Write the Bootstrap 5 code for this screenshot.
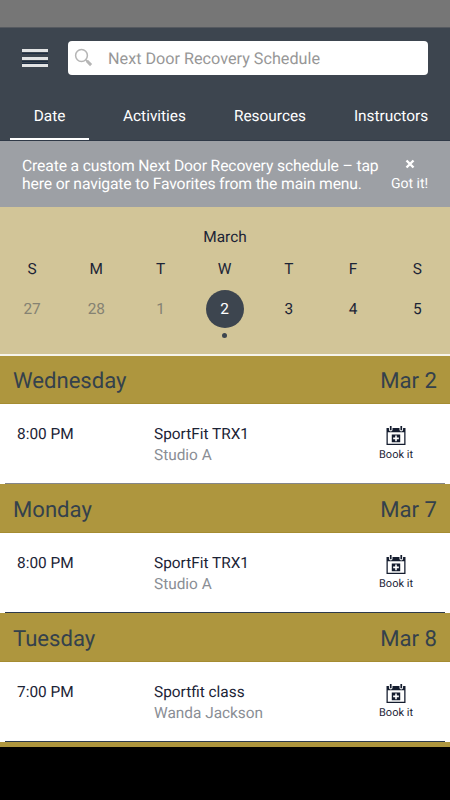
<!DOCTYPE html>
<html lang="en">
<head>
<meta charset="utf-8">
<meta name="viewport" content="width=device-width, initial-scale=1">
<title>Schedule</title>
<link href="https://cdn.jsdelivr.net/npm/bootstrap@5.3.0/dist/css/bootstrap.min.css" rel="stylesheet">
<style>
:root{--slate:#3d454f;--navy:#1c2436;--gold:#ae963e;--sand:#d2c598}
body{font-family:Roboto,"Liberation Sans",sans-serif;font-size:15.4px;font-weight:400;line-height:20px;color:var(--navy);background:#000;height:800px;text-rendering:geometricPrecision}
.screen{height:747px;background:#fff}
.statusbar{height:27px;background:#767676}
.topbar{height:114px;background:var(--slate);border-top:1px solid #55595f;border-bottom:1px solid #2f3947}
.searchrow{height:60px;padding:0 22px}
.searchbox{width:360px;height:34px;border-radius:4px;margin-left:20px;color:#979797;padding-left:6px;font-size:16.2px}
.searchbox svg{margin-right:15px;margin-bottom:1px}
.searchbox span{padding-top:2px}
.tabs{height:52px;color:#fff;padding:0 10px}
.tabs a{color:#fff;text-decoration:none;height:52px;padding-top:18px;text-align:center}
.tabs .active{border-bottom:2px solid #fff}
.t1{width:79px}.t2{width:131px}.t3{width:100px}.t4{width:120px;padding-left:22px}
.tip{height:66px;background:#9da0a5;color:#fff;padding:16px 0 0 22px;line-height:18px}
.tip .msg{width:369px;font-size:15.7px;letter-spacing:-.14px}
.tip .ok{font-size:14px;width:37px}
.tip .ok svg{margin-top:2px;margin-bottom:6px}
.calendar{height:149px;background:var(--sand);border-bottom:2px solid #f6f4ec}
.week{display:grid;grid-template-columns:repeat(7,64.2px);text-align:center}
.past{color:#858272}
.today{width:38px;height:38px;background:var(--slate);color:#fff}
.today-cell{margin-top:-1px}
.dot{width:5px;height:5px;background:var(--slate);margin-top:5px}
.dayhead{height:49px;background:var(--gold);color:#34414c;font-size:22.1px;padding:3px 13px 0;border-bottom:1px solid #a58c31}
.dayhead.first{height:48px;padding-top:2px}
.slot{height:80px;background:linear-gradient(#2d3a4c,#2d3a4c) 5px 100%/440px 1px no-repeat #fff;padding:20px 0 0 17px;line-height:21.3px}
.slot.soft{background-image:linear-gradient(#85868a,#85868a)}
.slot .when{width:137px}.slot .what{width:218px}
.sub{color:#8a8e95}
.book{font-size:11px;line-height:14px;width:48px}
.book svg{margin-top:2px;margin-bottom:3px}
</style>
<script src="https://cdn.jsdelivr.net/npm/bootstrap@5.3.0/dist/js/bootstrap.bundle.min.js"></script>
</head>
<body>
<svg class="d-none">
<symbol id="cal" viewBox="0 0 18 18"><path fill="#141c2e" fill-rule="evenodd" d="M0 2h2.300v1.500a1.700 1.700 0 0 0 3.400 0V2h6.600v1.500a1.700 1.700 0 0 0 3.400 0V2H18v16H0zM1.200 6v10.900h15.600V6z"/><path fill="#141c2e" d="M3.200 0h1.600v4H3.200zM13.200 0h1.600v4h-1.600zM5 8h8v7.500H5z"/><path stroke="#fff" stroke-width="1.500" d="M6.300 11.700h5.400M9 9v5.400"/></symbol>
</svg>
<div class="screen d-flex flex-column overflow-hidden">
<div class="statusbar flex-shrink-0"></div>
<header class="topbar flex-shrink-0">
<div class="searchrow d-flex align-items-center">
<svg width="26" height="18" viewBox="0 0 26 18"><path stroke="#e2e3e4" stroke-width="3" d="M0 1.500h26M0 9.500h26M0 16.500h26"/><path stroke="#1e2d42" d="M0 4.500h26M0 12.500h26M0 14.500h26"/></svg>
<div class="searchbox bg-white d-flex align-items-center"><svg width="19" height="19" viewBox="0 0 19 19" fill="none" stroke="#b5b5b5"><circle cx="7.500" cy="7.500" r="5.900" stroke-width="1.500"/><path stroke-width="1.500" d="M11.500 11.500l2 2"/><path stroke-width="3" d="M12.800 12.800l4.300 4.300"/></svg><span>Next Door Recovery Schedule</span></div>
</div>
<nav class="tabs d-flex"><a class="active t1" href="#">Date</a><a class="t2" href="#">Activities</a><a class="t3" href="#">Resources</a><a class="t4" href="#">Instructors</a></nav>
</header>
<div class="tip d-flex flex-shrink-0"><div class="msg text-nowrap">Create a custom Next Door Recovery schedule – tap<br>here or navigate to Favorites from the main menu.</div><div class="ok d-flex flex-column align-items-center text-nowrap"><svg width="10" height="10" viewBox="0 0 10 10"><path stroke="#fff" stroke-width="2.400" d="M1.500 1.500l7 7M8.500 1.500l-7 7"/></svg><span>Got it!</span></div></div>
<section class="calendar flex-shrink-0">
<div class="text-center pt-3 mt-1">March</div>
<div class="week mt-2 pt-1"><span>S</span><span>M</span><span>T</span><span>W</span><span>T</span><span>F</span><span>S</span></div>
<div class="week mt-2 pt-1 align-items-start"><span class="past pt-2">27</span><span class="past pt-2">28</span><span class="past pt-2">1</span><div class="today-cell d-flex flex-column align-items-center"><span class="today rounded-circle d-flex align-items-center justify-content-center">2</span><i class="dot rounded-circle"></i></div><span class="pt-2">3</span><span class="pt-2">4</span><span class="pt-2">5</span></div>
</section>
<div class="dayhead first d-flex justify-content-between align-items-center flex-shrink-0"><span>Wednesday</span><span>Mar 2</span></div>
<div class="slot soft d-flex flex-shrink-0"><div class="when">8:00 PM</div><div class="what">SportFit TRX1<div class="sub">Studio A</div></div><div class="book d-flex flex-column align-items-center"><svg width="20" height="19"><use href="#cal"/></svg>Book it</div></div>
<div class="dayhead d-flex justify-content-between align-items-center flex-shrink-0"><span>Monday</span><span>Mar 7</span></div>
<div class="slot d-flex flex-shrink-0"><div class="when">8:00 PM</div><div class="what">SportFit TRX1<div class="sub">Studio A</div></div><div class="book d-flex flex-column align-items-center"><svg width="20" height="19"><use href="#cal"/></svg>Book it</div></div>
<div class="dayhead d-flex justify-content-between align-items-center flex-shrink-0"><span>Tuesday</span><span>Mar 8</span></div>
<div class="slot d-flex flex-shrink-0"><div class="when">7:00 PM</div><div class="what">Sportfit class<div class="sub">Wanda Jackson</div></div><div class="book d-flex flex-column align-items-center"><svg width="20" height="19"><use href="#cal"/></svg>Book it</div></div>
<div class="dayhead flex-shrink-0"></div>
</div>
</body>
</html>
